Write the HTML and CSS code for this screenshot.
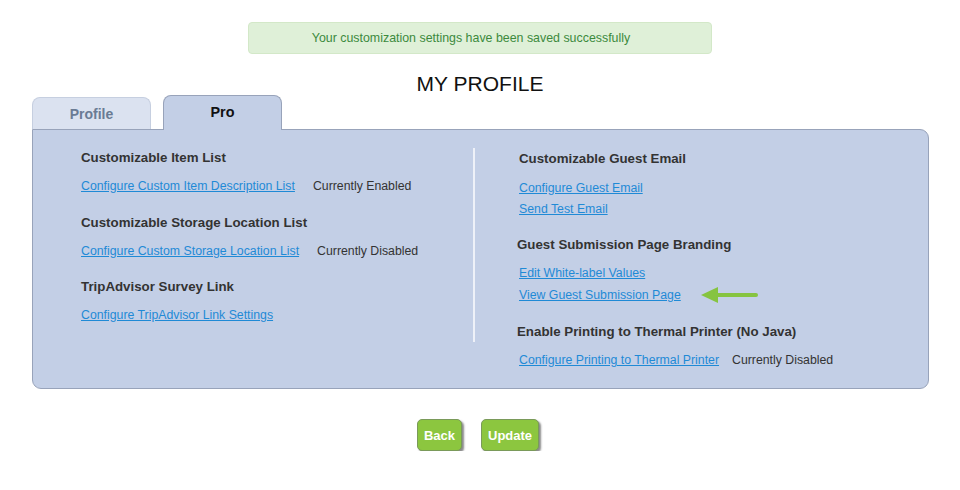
FILE: index.html
```html
<!DOCTYPE html>
<html lang="en">
<head>
    <meta charset="UTF-8">
    <meta name="viewport" content="width=device-width, initial-scale=1.0">
    <title>My Profile</title>
    <link rel="stylesheet" href="styles.css">
</head>
<body>
    <div class="alert">Your customization settings have been saved successfully</div>
    <h1 class="page-title">MY PROFILE</h1>

    <div class="wrap">
        <div class="tabs">
            <div class="tab">Profile</div>
            <div class="tab active">Pro</div>
        </div>
        <div class="panel">
            <div class="col col-left">
                <div class="section">
                    <h3>Customizable Item List</h3>
                    <div class="row"><a href="#">Configure Custom Item Description List</a><span class="status">Currently Enabled</span></div>
                </div>
                <div class="section">
                    <h3>Customizable Storage Location List</h3>
                    <div class="row"><a href="#">Configure Custom Storage Location List</a><span class="status">Currently Disabled</span></div>
                </div>
                <div class="section">
                    <h3>TripAdvisor Survey Link</h3>
                    <div class="row"><a href="#">Configure TripAdvisor Link Settings</a></div>
                </div>
            </div>
            <div class="divider"></div>
            <div class="col col-right">
                <div class="section">
                    <h3 class="first">Customizable Guest Email</h3>
                    <div class="row"><a href="#">Configure Guest Email</a></div>
                    <div class="row tight"><a href="#">Send Test Email</a></div>
                </div>
                <div class="section">
                    <h3>Guest Submission Page Branding</h3>
                    <div class="row"><a href="#">Edit White-label Values</a></div>
                    <div class="row tight"><a href="#">View Guest Submission Page</a>
                        <svg class="arrow" width="60" height="18" viewBox="0 0 60 18">
                            <line x1="14" y1="9" x2="56" y2="9" stroke="#86c440" stroke-width="4" stroke-linecap="round"/>
                            <polygon points="1,9 18,1 18,17" fill="#86c440"/>
                        </svg>
                    </div>
                </div>
                <div class="section">
                    <h3>Enable Printing to Thermal Printer (No Java)</h3>
                    <div class="row"><a href="#">Configure Printing to Thermal Printer</a><span class="status short">Currently Disabled</span></div>
                </div>
            </div>
        </div>
    </div>

    <div class="actions">
        <button class="btn">Back</button>
        <button class="btn">Update</button>
    </div>
</body>
</html>
```

FILE: styles.css
```css
body {
    margin: 0;
    font-family: 'Liberation Sans', Arial, sans-serif;
    background: #fff;
    color: #333;
}
.alert {
    width: 444px;
    height: 30px;
    margin: 22px auto 0;
    padding-right: 18px;
    background: #dff0d8;
    border: 1px solid #d3e8c8;
    border-radius: 4px;
    color: #3c8a3d;
    font-size: 12.4px;
    line-height: 30px;
    text-align: center;
}
.page-title {
    margin: 18px 0 0;
    font-size: 21px;
    font-weight: normal;
    line-height: 23px;
    text-align: center;
    color: #111;
}
.wrap {
    padding: 0 31px 0 32px;
}
.tabs {
    display: flex;
    align-items: flex-end;
    gap: 12px;
}
.tab {
    width: 117px;
    height: 31px;
    background: #dbe2f0;
    border: 1px solid #c6cfe0;
    border-bottom: none;
    border-radius: 8px 8px 0 0;
    color: #6a7b94;
    font-size: 14px;
    font-weight: bold;
    line-height: 33px;
    text-align: center;
}
.tab.active {
    height: 34px;
    margin-bottom: -1px;
    position: relative;
    background: #c3cfe6;
    border-color: #98a3ba;
    color: #111;
    font-size: 14.4px;
    line-height: 32px;
}
.panel {
    display: flex;
    height: 258px;
    background: #c3cfe6;
    border: 1px solid #98a3ba;
    border-radius: 0 9px 9px 9px;
}
.col-left {
    width: 392px;
    padding: 18px 0 0 48px;
}
.divider {
    width: 2px;
    height: 194px;
    margin-top: 18px;
    background: #eef1f8;
}
.col-right {
    flex: 1;
    padding: 19px 0 0 42px;
}
.section + .section {
    margin-top: 17px;
}
.col-left .section:nth-child(3) {
    margin-top: 16px;
}
.col-right .section:nth-child(2) {
    margin-top: 16px;
}
.col-right .section:nth-child(3) {
    margin-top: 17px;
}
h3 {
    margin: 0 0 8px;
    font-size: 13.3px;
    font-weight: bold;
    line-height: 20px;
    color: #333;
}
.col-right h3.first {
    padding-left: 2px;
    margin-bottom: 9px;
}
.row {
    font-size: 12.3px;
    line-height: 20px;
    display: flex;
    align-items: center;
}
.col-right .row {
    padding-left: 2px;
}
.row.tight {
    margin-top: 1px;
}
.col-right .section:nth-child(2) .row.tight {
    margin-top: 2px;
}
.row a {
    color: #1f8ad6;
    text-decoration: underline;
}
.status {
    margin-left: 18px;
    color: #333;
}
.status.short {
    margin-left: 13px;
}
.arrow {
    margin-left: 19px;
}
.actions {
    display: flex;
    justify-content: center;
    gap: 19px;
    margin-top: 30px;
    padding-right: 4px;
}
.btn {
    height: 32px;
    padding: 0 6px;
    background: #8cc63f;
    border: 1px solid #7a9a5a;
    border-radius: 5px;
    box-shadow: 2px 2px 2px rgba(60, 60, 60, 0.6);
    color: #fff;
    font-family: 'Liberation Sans', Arial, sans-serif;
    font-size: 13px;
    font-weight: bold;
}
```
